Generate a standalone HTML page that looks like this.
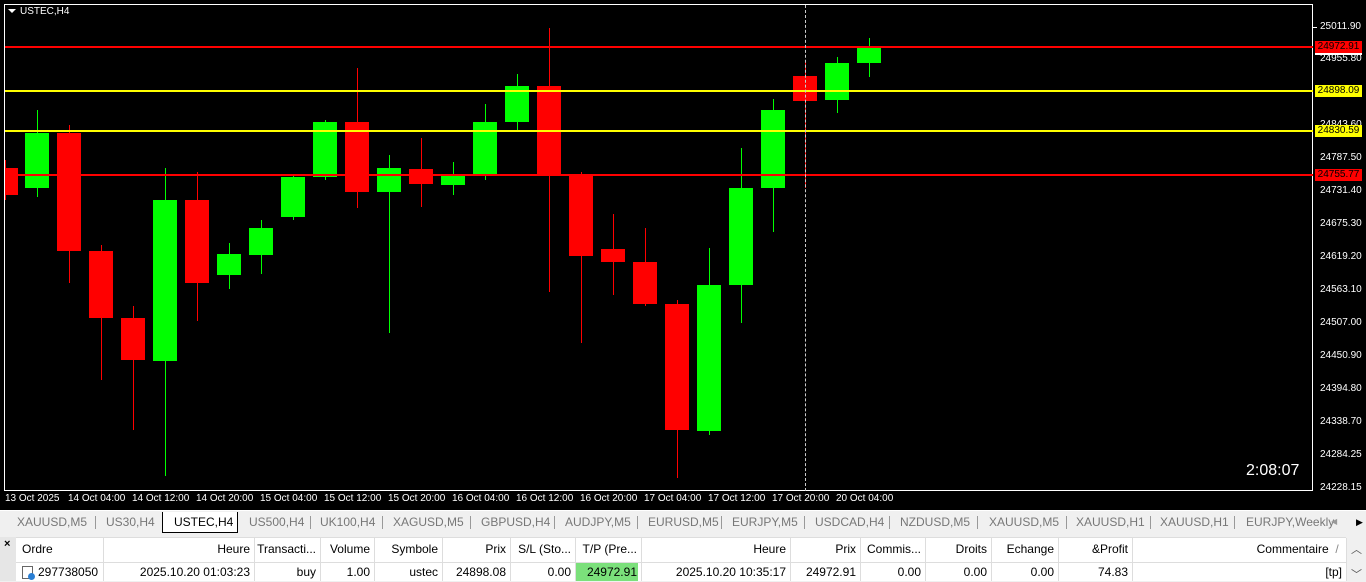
<!DOCTYPE html>
<html><head><meta charset="utf-8"><style>
*{margin:0;padding:0;box-sizing:border-box}
body{width:1366px;height:581px;overflow:hidden;background:#f0f0f0;font-family:"Liberation Sans",sans-serif;position:relative}
.a{position:absolute}
#chart{left:0;top:0;width:1366px;height:510px;background:#000}
#frame{left:4px;top:4px;width:1309px;height:487px;border:1px solid #fff}
.pl{position:absolute;left:1320px;font-size:10px;color:#fff;line-height:11px}
.tk{position:absolute;left:1313px;width:4px;height:1px;background:#fff}
.tag{position:absolute;left:1315px;width:47px;height:12px;font-size:10px;line-height:12px;text-align:center;color:#000}
.tl{position:absolute;top:493px;font-size:10px;color:#fff}
.tab{position:absolute;top:515px;font-size:12px;color:#777}
.sep{position:absolute;top:516px;width:1px;height:13px;background:#999}
.cell{position:absolute;font-size:12px;color:#000;text-align:right;padding-right:4px;white-space:nowrap;overflow:hidden}
</style></head><body>
<div id="chart" class="a"></div>
<div id="frame" class="a"></div>
<div class="a" style="left:8px;top:9px;width:0;height:0;border-left:4px solid transparent;border-right:4px solid transparent;border-top:4px solid #fff"></div>
<div class="a" style="left:20px;top:6px;font-size:10px;color:#fff">USTEC,H4</div>
<div id="c"></div>
<div class="a" style="left:5px;top:46px;width:1308px;height:2px;background:#f00"></div>
<div class="a" style="left:5px;top:90px;width:1308px;height:2px;background:#ff0"></div>
<div class="a" style="left:5px;top:130px;width:1308px;height:2px;background:#ff0"></div>
<div class="a" style="left:5px;top:174px;width:1308px;height:2px;background:#f00"></div>
<div class="a" style="left:805px;top:5px;height:486px;border-left:1px dashed #ccc"></div>
<div class="a" style="left:1246px;top:462px;font-size:16px;color:#fff">2:08:07</div>
<div class="tk" style="top:27px"></div><div class="pl" style="top:21px">25011.90</div>
<div class="pl" style="top:53px">24955.80</div>
<div class="pl" style="top:119px">24843.60</div>
<div class="pl" style="top:152px">24787.50</div>
<div class="pl" style="top:185px">24731.40</div>
<div class="pl" style="top:218px">24675.30</div>
<div class="pl" style="top:251px">24619.20</div>
<div class="pl" style="top:284px">24563.10</div>
<div class="pl" style="top:317px">24507.00</div>
<div class="pl" style="top:350px">24450.90</div>
<div class="pl" style="top:383px">24394.80</div>
<div class="pl" style="top:416px">24338.70</div>
<div class="pl" style="top:449px">24284.25</div>
<div class="pl" style="top:482px">24228.15</div>
<div class="tag" style="top:41px;background:#f00">24972.91</div>
<div class="a" style="left:1315px;top:53px;width:47px;height:2px;background:#fff"></div>
<div class="tag" style="top:85px;background:#ff0">24898.09</div>
<div class="tag" style="top:125px;background:#ff0">24830.59</div>
<div class="tag" style="top:169px;background:#f00">24755.77</div>
<div class="tl" style="left:5px">13 Oct 2025</div>
<div class="tl" style="left:68px">14 Oct 04:00</div>
<div class="tl" style="left:132px">14 Oct 12:00</div>
<div class="tl" style="left:196px">14 Oct 20:00</div>
<div class="tl" style="left:260px">15 Oct 04:00</div>
<div class="tl" style="left:324px">15 Oct 12:00</div>
<div class="tl" style="left:388px">15 Oct 20:00</div>
<div class="tl" style="left:452px">16 Oct 04:00</div>
<div class="tl" style="left:516px">16 Oct 12:00</div>
<div class="tl" style="left:580px">16 Oct 20:00</div>
<div class="tl" style="left:644px">17 Oct 04:00</div>
<div class="tl" style="left:708px">17 Oct 12:00</div>
<div class="tl" style="left:772px">17 Oct 20:00</div>
<div class="tl" style="left:836px">20 Oct 04:00</div>
<div class="a" style="left:0;top:510px;width:1366px;height:24px;background:#f0f0f0;border-top:1px solid #fff"></div>
<div class="a" style="left:162px;top:512px;width:76px;height:21px;background:#fff;border:1px solid #000;border-top:none"></div>
<div class="tab" style="left:17px">XAUUSD,M5</div><div class="tab" style="left:106px">US30,H4</div>
<div class="tab" style="left:174px;color:#000">USTEC,H4</div><div class="tab" style="left:249px">US500,H4</div>
<div class="tab" style="left:320px">UK100,H4</div><div class="tab" style="left:393px">XAGUSD,M5</div>
<div class="tab" style="left:481px">GBPUSD,H4</div><div class="tab" style="left:565px">AUDJPY,M5</div>
<div class="tab" style="left:648px">EURUSD,M5</div><div class="tab" style="left:732px">EURJPY,M5</div>
<div class="tab" style="left:815px">USDCAD,H4</div><div class="tab" style="left:900px">NZDUSD,M5</div>
<div class="tab" style="left:989px">XAUUSD,M5</div><div class="tab" style="left:1076px">XAUUSD,H1</div>
<div class="tab" style="left:1160px">XAUUSD,H1</div><div class="tab" style="left:1246px">EURJPY,Weekly</div>
<div class="sep" style="left:95px"></div><div class="sep" style="left:310px"></div><div class="sep" style="left:382px"></div><div class="sep" style="left:470px"></div><div class="sep" style="left:554px"></div><div class="sep" style="left:637px"></div><div class="sep" style="left:721px"></div><div class="sep" style="left:804px"></div><div class="sep" style="left:889px"></div><div class="sep" style="left:977px"></div><div class="sep" style="left:1066px"></div><div class="sep" style="left:1150px"></div><div class="sep" style="left:1234px"></div>
<div class="a" style="left:1331px;top:517px;font-size:8px;color:#999">◀</div>
<div class="a" style="left:1356px;top:517px;font-size:9px">▶</div>
<div class="a" style="left:0;top:537px;width:16px;height:44px;background:#e6e6e6"></div>
<div class="a" style="left:4px;top:538px;font-size:11px;font-weight:bold">×</div>
<div class="a" style="left:16px;top:537px;width:1330px;height:26px;background:#fff;border-bottom:1px solid #ddd;border-top:1px solid #ddd"></div>
<div class="a" style="left:16px;top:563px;width:1330px;height:18px;background:#fff"></div>
<div class="a" style="left:575px;top:563px;width:63px;height:18px;background:#7be07b"></div>
<div class="a" style="left:1346px;top:537px;width:20px;height:44px;background:#f0f0f0"></div>
<div class="a" style="left:1351px;top:541px;font-size:11px;color:#555">︿</div>
<div class="a" style="left:1351px;top:566px;font-size:11px;color:#555">﹀</div>
<div id="t"></div>
<div class="a" style="left:22px;top:566px;width:11px;height:13px;border:1px solid #666;background:#fff"></div>
<div class="a" style="left:28px;top:573px;width:7px;height:7px;border-radius:50%;background:#2a7fd4"></div>
<script>
var d=[[5,168,195,'r',160,200],[25,133,188,'g',110,197],[57,133,251,'r',125,283],[89,251,318,'r',245,380],[121,318,360,'r',306,430],[153,200,361,'g',168,476],[185,200,283,'r',172,321],[217,254,275,'g',243,289],[249,228,255,'g',220,274],[281,177,217,'g',175,220],[313,122,177,'g',120,180],[345,122,192,'r',68,208],[377,168,192,'g',155,333],[409,169,184,'r',138,207],[441,176,185,'g',162,195],[473,122,175,'g',104,180],[505,86,122,'g',74,130],[537,86,175,'r',28,292],[569,176,256,'r',172,343],[601,249,262,'r',214,295],[633,262,304,'r',228,306],[665,304,430,'r',300,478],[697,285,431,'g',248,435],[729,188,285,'g',148,323],[761,110,188,'g',99,232],[793,76,101,'r',60,188],[825,63,100,'g',57,113],[857,48,63,'g',38,77]];
var h='';d.forEach(function(c,i){var col=c[3]=='r'?'#f00':'#0f0';var w=i==0?13:24;var cx=i==0?5:c[0]+12;
h+='<div class="a" style="left:'+cx+'px;top:'+c[4]+'px;width:1px;height:'+(c[5]-c[4])+'px;background:'+col+'"></div>';
h+='<div class="a" style="left:'+c[0]+'px;top:'+c[1]+'px;width:'+w+'px;height:'+(c[2]-c[1])+'px;background:'+col+'"></div>';});
document.getElementById('c').innerHTML=h;
var cols=[[16,103,'Ordre','297738050'],[103,254,'Heure','2025.10.20 01:03:23'],[254,320,'Transacti...','buy'],[320,374,'Volume','1.00'],[374,442,'Symbole','ustec'],[442,510,'Prix','24898.08'],[510,575,'S/L (Sto...','0.00'],[575,641,'T/P (Pre...','24972.91'],[641,790,'Heure','2025.10.20 10:35:17'],[790,860,'Prix','24972.91'],[860,925,'Commis...','0.00'],[925,991,'Droits','0.00'],[991,1058,'Echange','0.00'],[1058,1132,'&amp;Profit','74.83'],[1132,1346,'Commentaire &nbsp;<span style="color:#888">/</span>&nbsp;','[tp]']];
var t='';cols.forEach(function(c,i){var w=c[1]-c[0];var al=i==0?'text-align:left;padding-left:'+(i==0?6:0)+'px;':'';
t+='<div class="a" style="left:'+c[1]+'px;top:538px;width:1px;height:43px;background:#ddd"></div>';
t+='<div class="cell" style="left:'+c[0]+'px;top:542px;width:'+w+'px;'+al+'">'+c[2]+'</div>';
t+='<div class="cell" style="left:'+c[0]+'px;top:565px;width:'+w+'px;'+(i==0?'text-align:left;padding-left:22px;':'')+'">'+c[3]+'</div>';});
document.getElementById('t').innerHTML=t;
</script>
</body></html>
